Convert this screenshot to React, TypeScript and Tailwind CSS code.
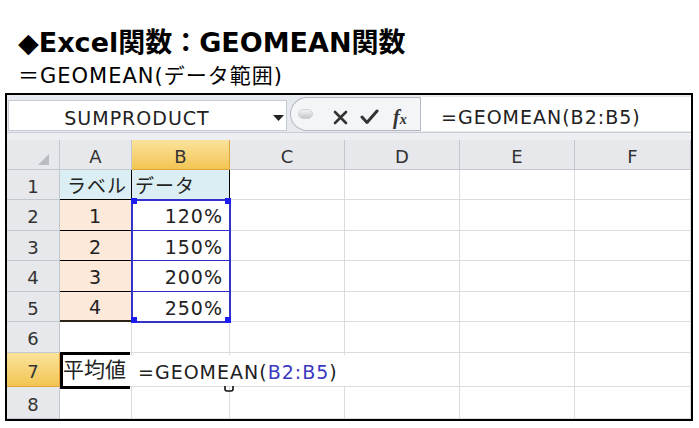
import React from "react";

const COLS = ["A", "B", "C", "D", "E", "F"];

type CellSpec = {
  text?: React.ReactNode;
  cls: string;
};

function cellFor(r: number, c: number): CellSpec {
  const base = "flex items-center pt-[3px] text-[19px] tracking-[1px] text-[#222] overflow-visible whitespace-nowrap";
  if (r === 1 && c === 0)
    return { text: "ラベル", cls: `${base} justify-end pr-[4px] bg-[#daeef3] border-r border-b border-black` };
  if (r === 1 && c === 1)
    return { text: "データ", cls: `${base} justify-start pl-[3px] bg-[#daeef3] border-r border-b border-black` };
  if (r >= 2 && r <= 5 && c === 0)
    return {
      text: String(r - 1),
      cls:
        r === 5
          ? `${base} justify-center bg-[#fde9d9] border-r border-b-2 border-[#2b2218]`
          : `${base} justify-center bg-[#fde9d9] border-r border-b border-black`,
    };
  if (r >= 2 && r <= 5 && c === 1) {
    const vals = ["120%", "150%", "200%", "250%"];
    return { text: vals[r - 2], cls: `${base} justify-end pr-[6px] bg-white border-r border-b border-[#3030c8]` };
  }
  if (r === 7 && c === 0)
    return {
      text: <span className="text-[21px] tracking-[0px]">平均値</span>,
      cls: `${base} justify-start pl-[3px] bg-white border-r border-b border-[#dadcdf]`,
    };
  return { cls: `${base} bg-white border-r border-b border-[#dadcdf]` };
}

export default function App() {
  const rows = [1, 2, 3, 4, 5, 6, 7, 8];
  return (
    <div className="w-[699px] h-[428px] bg-white overflow-hidden font-['DejaVu_Sans','Noto_Sans_CJK_JP',sans-serif] text-black">
      <div className="pl-[18px] pt-[27px]">
        <div className="text-[27px] font-bold leading-[32px] whitespace-nowrap">◆Excel関数：GEOMEAN関数</div>
        <div className="mt-[4px] text-[21px] leading-[26px] tracking-[1px] whitespace-nowrap">＝GEOMEAN(データ範囲)</div>
      </div>

      <div className="ml-[5px] mt-[4px] w-[688px] h-[328px] border-2 border-black bg-white flex flex-col">
        {/* formula bar */}
        <div className="flex h-[37px] bg-[#e6e9ed] shrink-0">
          <div className="ml-[1px] mt-[5px] h-[31px] w-[279px] bg-white border border-[#c6ccd4] flex items-center pt-[5px]">
            <div className="w-[256px] text-center text-[19px] tracking-[1px] text-[#222]">SUMPRODUCT</div>
            <svg width="11" height="6" viewBox="0 0 11 6" className="ml-[8px]">
              <path d="M0 0 L11 0 L5.5 6 Z" fill="#222" />
            </svg>
          </div>
          <div className="ml-[3px] mt-[2px] h-[34px] w-[130px] rounded-l-[17px] border border-r-0 border-[#b3b9c2] bg-[#f4f5f7] flex items-center pt-[6px]">
            <div className="ml-[7px] mb-[6px] w-[15px] h-[10px] rounded-full bg-linear-to-b from-[#f4f4f4] to-[#c3c7cc] border border-[#d0d3d8]" />
            <svg width="15" height="15" viewBox="0 0 15 15" className="ml-[20px]">
              <path d="M2 2 L13 13 M13 2 L2 13" stroke="#333" strokeWidth="2.6" strokeLinecap="round" />
            </svg>
            <svg width="19" height="16" viewBox="0 0 19 16" className="ml-[12px]">
              <path d="M2 8 L7 13.5 L17 2" stroke="#333" strokeWidth="3" fill="none" strokeLinecap="round" strokeLinejoin="round" />
            </svg>
            <span className="ml-[14px] font-['Liberation_Serif',serif] italic font-bold text-[20px] leading-none text-[#333]">
              f<span className="text-[14px]">x</span>
            </span>
          </div>
          <div className="mt-[2px] h-[34px] flex-1 bg-white border-l border-[#b3b9c2] flex items-center pl-[20px] pt-[6px] text-[19px] tracking-[1px] text-[#222] whitespace-nowrap">
            =GEOMEAN(B2:B5)
          </div>
        </div>
        <div className="h-[8px] shrink-0 bg-[#eceef1] border-t border-[#c8cdd3]" />

        {/* grid */}
        <div className="relative grid grid-cols-[53px_72px_98px_115px_115px_115px_116px] grid-rows-[30px_30px_31px_30px_31px_30px_31px_34px_32px]">
          {/* header row */}
          <div className="relative bg-[#e6e8eb] border-r border-b border-[#c3c8cf]">
            <svg width="11" height="11" viewBox="0 0 11 11" className="absolute right-[10px] bottom-[4px]">
              <path d="M11 0 L11 11 L0 11 Z" fill="#b9bdc3" />
            </svg>
          </div>
          {COLS.map((c) => (
            <div
              key={c}
              className={
                c === "B"
                  ? "flex items-center justify-center pt-[3px] text-[18px] text-[#333] bg-linear-to-b from-[#fae39a] to-[#f3c551] border-r border-b border-[#e2a43c]"
                  : "flex items-center justify-center pt-[3px] text-[18px] text-[#333] bg-[#e6e8eb] border-r border-b border-[#c3c8cf]"
              }
            >
              {c}
            </div>
          ))}
          {rows.map((r) => (
            <React.Fragment key={r}>
              <div
                className={
                  r === 7
                    ? "flex items-center justify-center pt-[3px] text-[18px] text-[#333] bg-linear-to-b from-[#fae39a] to-[#f3c551] border-r border-b border-[#e2a43c]"
                    : "flex items-center justify-center pt-[3px] text-[18px] text-[#333] bg-[#e6e8eb] border-r border-b border-[#c3c8cf]"
                }
              >
                {r}
              </div>
              {COLS.map((_, ci) => {
                const s = cellFor(r, ci);
                return (
                  <div key={ci} className={s.cls}>
                    {s.text}
                  </div>
                );
              })}
            </React.Fragment>
          ))}

          {/* selection B2:B5 */}
          <div className="absolute left-[124px] top-[59px] w-[100px] h-[124px] border-2 border-[#3333cc] pointer-events-none" />
          <div className="absolute left-[124px] top-[58px] w-[6px] h-[6px] bg-[#1c1cf0]" />
          <div className="absolute left-[218px] top-[58px] w-[6px] h-[6px] bg-[#1c1cf0]" />
          <div className="absolute left-[124px] top-[177px] w-[6px] h-[6px] bg-[#1c1cf0]" />
          <div className="absolute left-[218px] top-[177px] w-[6px] h-[6px] bg-[#1c1cf0]" />

          {/* active cell A7 */}
          <div className="absolute left-[53px] top-[212px] w-[70px] h-[37px] border-t-[3px] border-b-[3px] border-l-[3px] border-black" />
          {/* edit overlay */}
          <div className="absolute left-[121px] top-[215px] w-[217px] h-[31px] bg-white flex items-center pl-[10px] pt-[4px] text-[19px] tracking-[1px] text-[#222] whitespace-nowrap">
            =GEOMEAN(<span className="text-[#3a3ac0]">B2:B5</span>)
          </div>
          <svg width="10" height="6" viewBox="0 0 10 6" className="absolute left-[217px] top-[246px]">
            <path d="M1 0 L1 3 Q1 5 3 5 L7 5 Q9 5 9 3 L9 0" stroke="#111" strokeWidth="1.6" fill="none" />
          </svg>
        </div>
      </div>
    </div>
  );
}
